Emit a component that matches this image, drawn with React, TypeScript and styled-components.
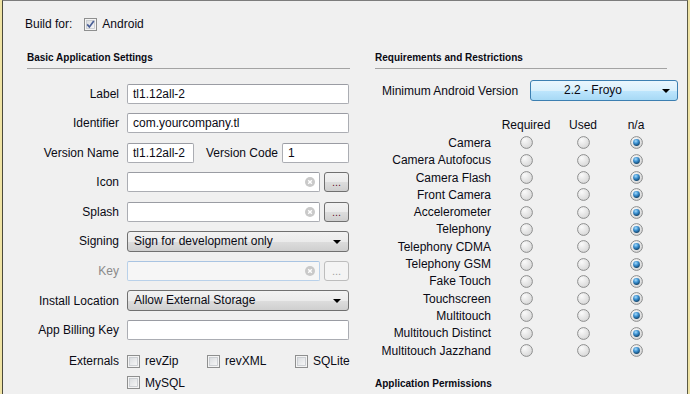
import React from "react";
import styled, { createGlobalStyle } from "styled-components";

const GlobalStyle = createGlobalStyle`
  html, body {
    margin: 0;
    padding: 0;
    background: #f0f0f0;
  }
  body {
    font-family: "Liberation Sans", Arial, sans-serif;
    font-size: 12px;
    color: #0a0a14;
  }
`;

const features = [
  "Camera",
  "Camera Autofocus",
  "Camera Flash",
  "Front Camera",
  "Accelerometer",
  "Telephony",
  "Telephony CDMA",
  "Telephony GSM",
  "Fake Touch",
  "Touchscreen",
  "Multitouch",
  "Multitouch Distinct",
  "Multitouch Jazzhand",
];

const Shell = styled.div`
  width: 690px;
  height: 394px;
  box-sizing: border-box;
  border-left: 2px solid #efe3a4;
  border-right: 2px solid #efe3a4;
  overflow: hidden;
`;

const Window = styled.div`
  height: 100%;
  box-sizing: border-box;
  border-left: 1px solid #4b4a3c;
  border-right: 1px solid #5b5a44;
  border-top: 1px solid #7c7c7c;
  background: #f0f0f0;
`;

const TopBar = styled.div`
  display: flex;
  align-items: center;
  height: 14px;
  padding: 16px 0 0 22px;
  line-height: 14px;
`;

const BuildLabel = styled.span`
  margin-right: 12px;
`;

const Columns = styled.div`
  display: flex;
  margin-top: 21px;
  padding-left: 24px;
`;

const LeftColumn = styled.div`
  width: 323px;
  margin-right: 25px;
`;

const RightColumn = styled.div`
  width: 292px;
  display: flex;
  flex-direction: column;
`;

const SectionTitle = styled.div<{ $top?: number }>`
  font-weight: bold;
  font-size: 10px;
  line-height: 12px;
  padding-bottom: 4px;
  border-bottom: 1px solid #a3a3a3;
  margin-top: ${({ $top }) => $top ?? 0}px;
`;

const Form = styled.div`
  margin-top: 14px;
  display: flex;
  flex-direction: column;
  gap: 8.6px;
`;

const Row = styled.div`
  display: grid;
  grid-template-columns: 92px 222px;
  column-gap: 8px;
  align-items: center;
  height: 21px;
`;

const FieldLabel = styled.label<{ $muted?: boolean }>`
  text-align: right;
  white-space: nowrap;
  color: ${({ $muted }) => ($muted ? "#8a8a8a" : "inherit")};
`;

const Field = styled.div`
  display: flex;
  align-items: center;
  gap: 4px;
`;

const TextBox = styled.div<{ $width?: number; $disabled?: boolean }>`
  position: relative;
  box-sizing: border-box;
  flex: ${({ $width }) => ($width ? "none" : "1")};
  width: ${({ $width }) => ($width ? `${$width}px` : "100%")};
  height: 20px;
  padding: 0 5px;
  line-height: 18px;
  border: 1px solid ${({ $disabled }) => ($disabled ? "#b9d1ea" : "#abadb3")};
  border-top-color: ${({ $disabled }) => ($disabled ? "#a9c4e2" : "#9a9ca3")};
  border-radius: 2px;
  background: ${({ $disabled }) => ($disabled ? "#f6f6f6" : "#ffffff")};
  white-space: nowrap;
`;

const ClearIcon = styled.span`
  position: absolute;
  right: 4px;
  top: 4px;
  width: 10px;
  height: 10px;
  display: flex;
`;

const MoreButton = styled.button<{ $disabled?: boolean }>`
  box-sizing: border-box;
  width: 26px;
  height: 20px;
  padding: 0 0 3px;
  border: 1px solid ${({ $disabled }) => ($disabled ? "#bdbdbd" : "#707070")};
  border-radius: 3px;
  background: ${({ $disabled }) =>
    $disabled
      ? "#f4f4f4"
      : "linear-gradient(#f2f2f2 0%, #ebebeb 50%, #dddddd 51%, #cfcfcf 100%)"};
  font-family: "Liberation Sans", Arial, sans-serif;
  font-size: 11px;
  line-height: 12px;
  color: ${({ $disabled }) => ($disabled ? "#a0a0a0" : "#6a1030")};
  display: flex;
  align-items: flex-end;
  justify-content: center;
`;

const Select = styled.div<{ $blue?: boolean; $width?: number }>`
  position: relative;
  box-sizing: border-box;
  flex: none;
  width: ${({ $width }) => ($width ? `${$width}px` : "100%")};
  height: 21px;
  padding: 0 22px 0 ${({ $blue }) => ($blue ? 0 : 6)}px;
  line-height: 19px;
  border: 1px solid ${({ $blue }) => ($blue ? "#3c7fb1" : "#707070")};
  border-radius: 3px;
  text-align: ${({ $blue }) => ($blue ? "center" : "left")};
  background: ${({ $blue }) =>
    $blue
      ? "linear-gradient(#eaf6fd 0%, #d9f0fc 50%, #bee6fd 51%, #a7d9f5 100%)"
      : "linear-gradient(#f2f2f2 0%, #ebebeb 50%, #dddddd 51%, #cfcfcf 100%)"};
  white-space: nowrap;
`;

const Arrow = styled.span`
  position: absolute;
  right: 7px;
  top: 8px;
  width: 0;
  height: 0;
  border-left: 4px solid transparent;
  border-right: 4px solid transparent;
  border-top: 4px solid #000;
`;

const VersionCodeLabel = styled.span`
  flex: none;
  width: 62px;
  margin: 0 10px 0 8px;
  white-space: nowrap;
`;

const ExternalsRow = styled.div`
  display: grid;
  grid-template-columns: 100px 80px 88px 60px;
  row-gap: 8px;
  margin-top: 5px;
  align-items: center;
`;

const ExternalsLabel = styled(FieldLabel)`
  padding-right: 8px;
`;

const CheckItem = styled.div`
  display: flex;
  align-items: center;
  gap: 5px;
  height: 13px;
  white-space: nowrap;
`;

const MinVersionRow = styled.div`
  display: flex;
  align-items: center;
  margin-top: 11px;
  padding-left: 7px;
`;

const MinVersionLabel = styled.span`
  flex: none;
  width: 148px;
  white-space: nowrap;
`;

const Matrix = styled.div`
  display: grid;
  grid-template-columns: 116px 70px 44px 62px;
  grid-auto-rows: 17.3px;
  align-items: center;
  margin-top: 16px;
`;

const ColHead = styled.div<{ $gap?: boolean }>`
  text-align: center;
  margin-bottom: ${({ $gap }) => ($gap ? 2 : 0)}px;
`;

const MatrixHeadSpacer = styled.div``;

const FeatureName = styled.div`
  text-align: right;
  white-space: nowrap;
`;

const RadioCell = styled.div`
  display: flex;
  justify-content: center;
  align-items: center;
`;

const MatrixRow = styled.div`
  display: contents;
`;

const CheckBox: React.FC<{ checked?: boolean }> = ({ checked }) => (
  <svg width="13" height="13" viewBox="0 0 13 13">
    <defs>
      <linearGradient id="cbfill" x1="0" y1="0" x2="1" y2="1">
        <stop offset="0" stopColor="#d9dcdf" />
        <stop offset="1" stopColor="#f7f7f7" />
      </linearGradient>
    </defs>
    <rect x="0.5" y="0.5" width="12" height="12" fill="#f4f4f4" stroke="#8e8f8f" />
    <rect x="2.5" y="2.5" width="8" height="8" fill="url(#cbfill)" stroke="#c4c8cc" strokeWidth="0.8" />
    {checked && (
      <path
        d="M3.2 6.4 L5.4 9 L9.8 3"
        fill="none"
        stroke="#4a5f97"
        strokeWidth="1.7"
      />
    )}
  </svg>
);

const Radio: React.FC<{ checked?: boolean }> = ({ checked }) => (
  <svg width="13" height="13" viewBox="0 0 13 13">
    <defs>
      <radialGradient id="rfill" cx="0.35" cy="0.3" r="0.8">
        <stop offset="0" stopColor="#fafafa" />
        <stop offset="1" stopColor="#d4d4d4" />
      </radialGradient>
      <radialGradient id="rdot" cx="0.4" cy="0.3" r="0.7">
        <stop offset="0" stopColor="#a6dcfb" />
        <stop offset="0.5" stopColor="#3a8fd0" />
        <stop offset="1" stopColor="#12466e" />
      </radialGradient>
    </defs>
    <circle cx="6.5" cy="6.5" r="5.9" fill="url(#rfill)" stroke="#8e8f8f" strokeWidth="1" />
    {checked && <circle cx="6.5" cy="6.5" r="3.4" fill="url(#rdot)" />}
  </svg>
);

const Clear: React.FC = () => (
  <ClearIcon>
    <svg width="10" height="10" viewBox="0 0 10 10">
      <circle cx="5" cy="5" r="5" fill="#c9c9c9" />
      <path d="M3.2 3.2 L6.8 6.8 M6.8 3.2 L3.2 6.8" stroke="#fff" strokeWidth="1.4" />
    </svg>
  </ClearIcon>
);

const FileRow: React.FC<{ label: string; disabled?: boolean }> = ({ label, disabled }) => (
  <Row>
    <FieldLabel $muted={disabled}>{label}</FieldLabel>
    <Field>
      <TextBox $width={193} $disabled={disabled}>
        <Clear />
      </TextBox>
      <MoreButton $disabled={disabled}>...</MoreButton>
    </Field>
  </Row>
);

export default function App() {
  return (
    <>
      <GlobalStyle />
      <Shell>
        <Window>
          <TopBar>
            <BuildLabel>Build for:</BuildLabel>
            <CheckItem>
              <CheckBox checked />
              Android
            </CheckItem>
          </TopBar>
          <Columns>
            <LeftColumn>
              <SectionTitle>Basic Application Settings</SectionTitle>
              <Form>
                <Row>
                  <FieldLabel>Label</FieldLabel>
                  <TextBox>tl1.12all-2</TextBox>
                </Row>
                <Row>
                  <FieldLabel>Identifier</FieldLabel>
                  <TextBox>com.yourcompany.tl</TextBox>
                </Row>
                <Row>
                  <FieldLabel>Version Name</FieldLabel>
                  <Field>
                    <TextBox $width={67}>tl1.12all-2</TextBox>
                    <VersionCodeLabel>Version Code</VersionCodeLabel>
                    <TextBox>1</TextBox>
                  </Field>
                </Row>
                <FileRow label="Icon" />
                <FileRow label="Splash" />
                <Row>
                  <FieldLabel>Signing</FieldLabel>
                  <Select>
                    Sign for development only
                    <Arrow />
                  </Select>
                </Row>
                <FileRow label="Key" disabled />
                <Row>
                  <FieldLabel>Install Location</FieldLabel>
                  <Select>
                    Allow External Storage
                    <Arrow />
                  </Select>
                </Row>
                <Row>
                  <FieldLabel>App Billing Key</FieldLabel>
                  <TextBox />
                </Row>
                <ExternalsRow>
                  <ExternalsLabel>Externals</ExternalsLabel>
                  <CheckItem>
                    <CheckBox />
                    revZip
                  </CheckItem>
                  <CheckItem>
                    <CheckBox />
                    revXML
                  </CheckItem>
                  <CheckItem>
                    <CheckBox />
                    SQLite
                  </CheckItem>
                  <span />
                  <CheckItem>
                    <CheckBox />
                    MySQL
                  </CheckItem>
                </ExternalsRow>
              </Form>
            </LeftColumn>
            <RightColumn>
              <SectionTitle>Requirements and Restrictions</SectionTitle>
              <MinVersionRow>
                <MinVersionLabel>Minimum Android Version</MinVersionLabel>
                <Select $blue $width={148}>
                  2.2 - Froyo
                  <Arrow />
                </Select>
              </MinVersionRow>
              <Matrix>
                <MatrixRow>
                  <MatrixHeadSpacer />
                  <ColHead $gap>Required</ColHead>
                  <ColHead $gap>Used</ColHead>
                  <ColHead $gap>n/a</ColHead>
                </MatrixRow>
                {features.map((f) => (
                  <MatrixRow key={f}>
                    <FeatureName>{f}</FeatureName>
                    <RadioCell>
                      <Radio />
                    </RadioCell>
                    <RadioCell>
                      <Radio />
                    </RadioCell>
                    <RadioCell>
                      <Radio checked />
                    </RadioCell>
                  </MatrixRow>
                ))}
              </Matrix>
              <SectionTitle $top={19}>Application Permissions</SectionTitle>
            </RightColumn>
          </Columns>
        </Window>
      </Shell>
    </>
  );
}
